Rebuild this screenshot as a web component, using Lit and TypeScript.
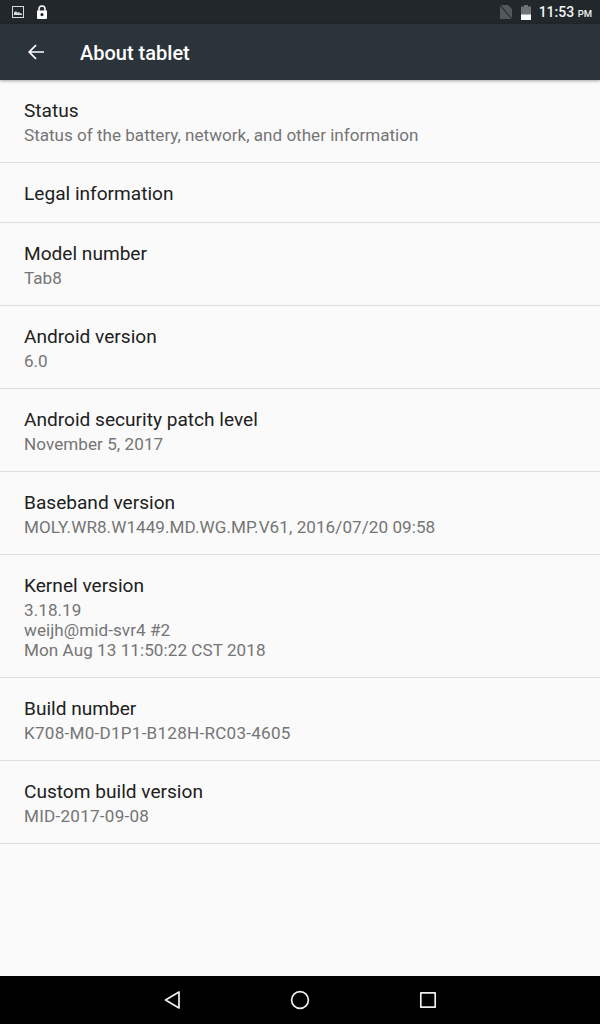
import { LitElement, html, css } from "lit";
import { customElement } from "lit/decorators.js";

const rows: [string, string[], string?][] = [
  ["Status", ["Status of the battery, network, and other information"]],
  ["Legal information", []],
  ["Model number", ["Tab8"]],
  ["Android version", ["6.0"]],
  ["Android security patch level", ["November 5, 2017"], "mid"],
  ["Baseband version", ["MOLY.WR8.W1449.MD.WG.MP.V61, 2016/07/20 09:58"], "mid"],
  ["Kernel version", ["3.18.19", "weijh@mid-svr4 #2", "Mon Aug 13 11:50:22 CST 2018"], "mid"],
  ["Build number", ["K708-M0-D1P1-B128H-RC03-4605"], "wide"],
  ["Custom build version", ["MID-2017-09-08"], "wide"],
];

@customElement("app-root")
export class AppRoot extends LitElement {
  static styles = css`
    :host {
      display: flex;
      flex-direction: column;
      width: 600px;
      height: 1024px;
      background: #fafafa;
      font-family: Roboto, "Liberation Sans", sans-serif;
      overflow: hidden;
    }
    .status {
      height: 24px;
      flex: none;
      background: #21272b;
      display: flex;
      align-items: center;
      padding: 0 0 0 12px;
      color: #fff;
    }
    .status .left { display: flex; align-items: center; gap: 12px; }
    .status .right { margin-left: auto; display: flex; align-items: center; }
    .clock { font-size: 14px; font-weight: 500; color: #f2f3f3; margin-left: 8px; margin-right: 8px; }
    .clock small { font-size: 9.5px; font-weight: 500; }
    svg { display: block; }
    .sim { margin-right: 9px; }
    .bar {
      height: 56px;
      flex: none;
      background: #2a343a;
      display: flex;
      align-items: center;
      box-shadow: 0 1px 3px rgba(0,0,0,.35);
      position: relative;
      z-index: 1;
    }
    .bar .back { margin-left: 28px; width: 20px; }
    .bar .title { margin-left: 32px; font-size: 20px; font-weight: 500; color: #fff; padding-top: 2px; }
    .list { flex: 1; min-height: 0; }
    .row {
      padding: 19px 24px 17px;
      border-bottom: 1px solid #dedede;
    }
    .t { font-size: 19.1px; line-height: 23px; color: #212121; }
    .s { font-size: 17.08px; line-height: 20px; color: #757575; margin-top: 3px; }
    .s + .s { margin-top: 0; }
    .s.mid { letter-spacing: 0.06px; }
    .s.wide { letter-spacing: 0.25px; }
    .nav {
      height: 48px;
      flex: none;
      background: #000;
      display: flex;
      align-items: center;
      justify-content: center;
      gap: 96px;
    }
  `;

  render() {
    return html`
      <div class="status">
        <div class="left">
          <svg width="12" height="12" viewBox="0 0 12 12">
            <rect x=".5" y=".5" width="11" height="11" fill="none" stroke="#d8d9da" stroke-width="1"/>
            <path d="M2 9V6.6l2-1.4 1.6 1.6L7 6l1 1.2 2 .4V9z" fill="#d8d9da"/>
          </svg>
          <svg width="12" height="14" viewBox="0 0 12 14">
            <path d="M3 6V4a3 3 0 0 1 6 0v2" fill="none" stroke="#fff" stroke-width="1.5"/>
            <path fill-rule="evenodd" d="M1 5.5h10V13a1 1 0 0 1-1 1H2a1 1 0 0 1-1-1zM6 8a1.6 1.6 0 1 0 0 3.2A1.6 1.6 0 0 0 6 8z" fill="#fff"/>
          </svg>
        </div>
        <div class="right">
          <svg class="sim" width="12" height="14" viewBox="0 0 12 14">
            <path d="M0 0h8l4 4v10H0z" fill="#54585b"/>
            <path d="M0 0l12 14" stroke="#2a2f33" stroke-width="1.2"/>
          </svg>
          <svg width="10" height="15" viewBox="0 0 10 15">
            <path d="M3 0h4v1.5h3V15H0V1.5h3z" fill="#6f7375"/>
            <rect y="9.5" width="10" height="5.5" fill="#fff"/>
          </svg>
          <span class="clock">11:53 <small>PM</small></span>
        </div>
      </div>
      <div class="bar">
        <div class="back">
          <svg width="16" height="16" viewBox="0 0 16 16" fill="none" stroke="#fff" stroke-width="1.7">
            <path d="M16 8H1.5M8 1.2 1.2 8 8 14.8"/>
          </svg>
        </div>
        <div class="title">About tablet</div>
      </div>
      <div class="list">
        ${rows.map(([t, subs, track]) => html`
          <div class="row">
            <div class="t">${t}</div>
            ${subs.map((s) => html`<div class="s ${track ?? ""}">${s}</div>`)}
          </div>`)}
      </div>
      <div class="nav">
        <svg width="32" height="20" viewBox="0 0 32 20" fill="none" stroke="#eee" stroke-width="1.7" stroke-linejoin="round">
          <path d="M23 2v16L9.5 10z"/>
        </svg>
        <svg width="32" height="20" viewBox="0 0 32 20" fill="none" stroke="#eee" stroke-width="1.7">
          <circle cx="16" cy="10" r="8.4"/>
        </svg>
        <svg width="32" height="20" viewBox="0 0 32 20" fill="none" stroke="#eee" stroke-width="1.7" stroke-linejoin="round">
          <rect x="8.8" y="2.8" width="14.4" height="14.4"/>
        </svg>
      </div>
    `;
  }
}
